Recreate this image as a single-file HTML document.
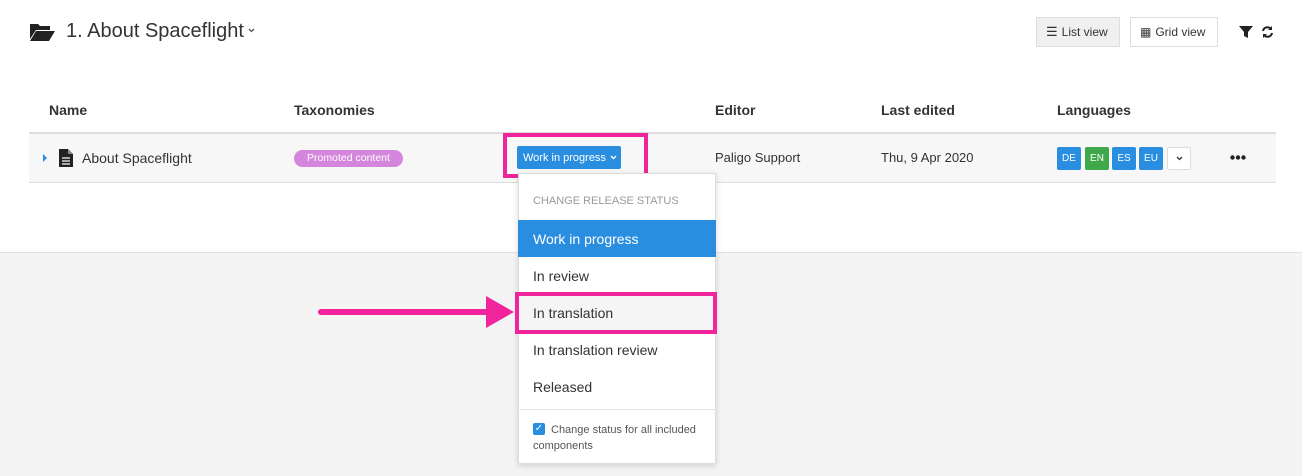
<!DOCTYPE html>
<html><head><style>
*{box-sizing:border-box;margin:0;padding:0}
body{width:1302px;height:476px;position:relative;overflow:hidden;background:#f4f4f4;font-family:"Liberation Sans",sans-serif;color:#333}
.a{position:absolute}
.top{left:0;top:0;width:1302px;height:253px;background:#fff;border-bottom:1px solid #e2e2e2}
.th{font-weight:bold;font-size:14px;color:#333;top:102px}
.btn{border:1px solid #ddd;font-size:12px;height:30px;top:17px;display:flex;align-items:center;padding:0 9px;gap:4px;color:#333}
.lang{top:147px;width:24px;height:23px;color:#fff;font-size:10px;display:flex;align-items:center;justify-content:center;border-radius:2px}
.it{left:518px;width:198px;height:37px;padding-left:15px;font-size:14px;display:flex;align-items:center;color:#333}
</style></head><body>
<div class="a top"></div>
<svg class="a" style="left:29px;top:21px" width="27" height="21" viewBox="0 0 27 21"><path d="M1 3h8l2 2h10v4H7L1 18z" fill="#222"/><path d="M7 10h19l-6 10H1z" fill="#222"/></svg>
<div class="a" style="left:66px;top:20px;font-size:20px;color:#333">1. About Spaceflight</div>
<svg class="a" style="left:248px;top:28px" width="7" height="5" viewBox="0 0 7 5"><path d="M1 1l2.5 2.5L6 1" stroke="#555" stroke-width="1.3" fill="none"/></svg>
<div class="a btn" style="left:1036px;width:84px;background:#f0f0f0"><span style="font-size:13px">☰</span>List view</div>
<div class="a btn" style="left:1130px;width:88px;background:#fff"><span style="font-size:12px">▦</span>Grid view</div>
<svg class="a" style="left:1239px;top:26px" width="14" height="13" viewBox="0 0 14 13"><path d="M0 0h14L9 6v6L5 10V6z" fill="#222"/></svg>
<svg class="a" style="left:1261px;top:25px" width="13" height="14" viewBox="0 0 13 14"><path d="M2 6a4.5 4.5 0 0 1 8-2M11 8a4.5 4.5 0 0 1-8 2" stroke="#222" stroke-width="2" fill="none"/><path d="M11 1v4H7zM2 13V9h4z" fill="#222"/></svg>
<div class="a th" style="left:49px">Name</div>
<div class="a th" style="left:294px">Taxonomies</div>
<div class="a th" style="left:715px">Editor</div>
<div class="a th" style="left:881px">Last edited</div>
<div class="a th" style="left:1057px">Languages</div>
<div class="a" style="left:29px;top:132px;width:1247px;height:51px;background:#f7f7f7;border-top:2px solid #ddd;border-bottom:1px solid #ddd"></div>
<div class="a" style="left:716px;top:183px;width:8px;height:49px;background:#fff"></div>
<div class="a" style="left:43px;top:154px;width:0;height:0;border-left:4px solid #2a8ee0;border-top:4px solid transparent;border-bottom:4px solid transparent"></div>
<svg class="a" style="left:59px;top:149px" width="14" height="18" viewBox="0 0 14 18"><path d="M0 0h9l5 5v13H0z" fill="#222"/><path d="M3 9h8M3 12h8M3 15h8" stroke="#f7f7f7" stroke-width="1.3"/><path d="M9 0v5h5" fill="#888"/></svg>
<div class="a" style="left:82px;top:150px;font-size:14px">About Spaceflight</div>
<div class="a" style="left:294px;top:150px;width:109px;height:17px;border-radius:9px;background:#d485dc;color:#fff;font-size:10.5px;text-align:center;line-height:17px">Promoted content</div>
<div class="a" style="left:517px;top:146px;width:104px;height:23px;background:#2a8ee0;border-radius:2px;color:#fff;font-size:11px;display:flex;align-items:center;padding-left:6px;gap:4px">Work in progress<svg width="7" height="5" viewBox="0 0 7 5"><path d="M1 1l2.5 2.5L6 1" stroke="#fff" stroke-width="1.4" fill="none"/></svg></div>
<div class="a" style="left:503px;top:133px;width:145px;height:45px;border:4px solid #f0259b"></div>
<div class="a" style="left:715px;top:150px;font-size:13px">Paligo Support</div>
<div class="a" style="left:881px;top:150px;font-size:13px">Thu, 9 Apr 2020</div>
<div class="a lang" style="left:1057px;background:#2a8ee0">DE</div>
<div class="a lang" style="left:1085px;background:#3fa84a">EN</div>
<div class="a lang" style="left:1112px;background:#2a8ee0">ES</div>
<div class="a lang" style="left:1139px;background:#2a8ee0">EU</div>
<div class="a lang" style="left:1167px;background:#fff;border:1px solid #ddd"><svg width="7" height="5" viewBox="0 0 7 5"><path d="M1 1l2.5 2.5L6 1" stroke="#333" stroke-width="1.3" fill="none"/></svg></div>
<svg class="a" style="left:1230px;top:155px" width="16" height="5" viewBox="0 0 16 5"><circle cx="2.5" cy="2.5" r="2.2" fill="#222"/><circle cx="8" cy="2.5" r="2.2" fill="#222"/><circle cx="13.5" cy="2.5" r="2.2" fill="#222"/></svg>
<div class="a" style="left:518px;top:173px;width:198px;height:291px;background:#fff;border:1px solid #ddd;box-shadow:0 2px 6px rgba(0,0,0,.15)"></div>
<div class="a" style="left:533px;top:195px;font-size:11px;color:#999">CHANGE RELEASE STATUS</div>
<div class="a it" style="top:220px;background:#2a8ee0;color:#fff">Work in progress</div>
<div class="a it" style="top:257px">In review</div>
<div class="a it" style="top:294px;background:#f5f5f5">In translation</div>
<div class="a it" style="top:331px">In translation review</div>
<div class="a it" style="top:368px">Released</div>
<div class="a" style="left:518px;top:409px;width:198px;height:1px;background:#e5e5e5"></div>
<div class="a" style="left:533px;top:423px;width:12px;height:12px;background:#2a8ee0;border-radius:2px;color:#fff;font-size:10px;line-height:12px;text-align:center">✓</div>
<div class="a" style="left:533px;top:422px;width:175px;font-size:11px;color:#555;line-height:16px;text-indent:18px">Change status for all included components</div>
<div class="a" style="left:515px;top:292px;width:202px;height:42px;border:4px solid #f0259b"></div>
<div class="a" style="left:318px;top:309px;width:172px;height:6px;background:#f0259b;border-radius:3px"></div>
<div class="a" style="left:486px;top:296px;width:0;height:0;border-left:28px solid #f0259b;border-top:16px solid transparent;border-bottom:16px solid transparent"></div>
</body></html>
